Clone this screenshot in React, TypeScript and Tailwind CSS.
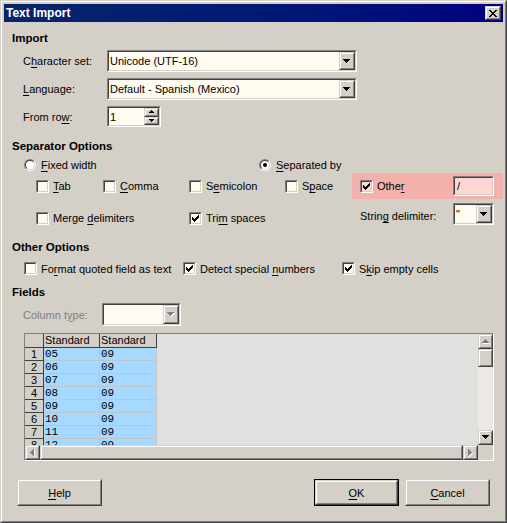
import type { ReactNode } from 'react'

const SUNKEN_OUT = 'border border-t-[#808080] border-l-[#808080] border-r-white border-b-white'
const SUNKEN_IN = 'border border-t-[#404040] border-l-[#404040] border-r-[#d4d0c8] border-b-[#d4d0c8]'
const RAISED_OUT = 'border border-t-[#d4d0c8] border-l-[#d4d0c8] border-r-[#404040] border-b-[#404040]'
const RAISED_IN = 'border border-t-white border-l-white border-r-[#808080] border-b-[#808080]'

const CHECK = ['......#', '.....##', '#...###', '##.###.', '#####..', '.###...', '..#....']
const CLOSE = ['##....##', '.##..##.', '..####..', '...##...', '..####..', '.##..##.', '##....##']

const rows = [
  ['05', '09'],
  ['06', '09'],
  ['07', '09'],
  ['08', '09'],
  ['09', '09'],
  ['10', '09'],
  ['11', '09'],
  ['12', '09'],
]

// "~" marks the accelerator letter, like the original resource strings
function T({ s }: { s: string }) {
  const i = s.indexOf('~')
  if (i < 0) return <>{s}</>
  return (
    <>
      {s.slice(0, i)}
      <span className="underline underline-offset-[2px]">{s[i + 1]}</span>
      {s.slice(i + 2)}
    </>
  )
}

function Bitmap({ map }: { map: string[] }) {
  return (
    <svg width={map[0].length} height={map.length} shapeRendering="crispEdges">
      {map.map((line, y) =>
        line.split('').map((c, x) => (c === '#' ? <rect key={`${x}-${y}`} x={x} y={y} width={1} height={1} fill="#000" /> : null))
      )}
    </svg>
  )
}

function Arrow({ dir, size = 4, disabled = false }: { dir: 'up' | 'down' | 'left' | 'right'; size?: number; disabled?: boolean }) {
  const rects: number[][] = []
  for (let i = 0; i < size; i++) {
    const len = 2 * (size - i) - 1
    if (dir === 'down') rects.push([i, i, len, 1])
    if (dir === 'up') rects.push([i, size - 1 - i, len, 1])
    if (dir === 'right') rects.push([i, i, 1, len])
    if (dir === 'left') rects.push([size - 1 - i, i, 1, len])
  }
  const horiz = dir === 'up' || dir === 'down'
  const w = horiz ? 2 * size - 1 : size
  const h = horiz ? size : 2 * size - 1
  return (
    <svg width={w + 1} height={h + 1} shapeRendering="crispEdges">
      {disabled && rects.map((r, k) => <rect key={`s${k}`} x={r[0] + 1} y={r[1] + 1} width={r[2]} height={r[3]} fill="#fff" />)}
      {rects.map((r, k) => (
        <rect key={k} x={r[0]} y={r[1]} width={r[2]} height={r[3]} fill={disabled ? '#808080' : '#000'} />
      ))}
    </svg>
  )
}

function Sunken({ className = '', inner = '', children }: { className?: string; inner?: string; children?: ReactNode }) {
  return (
    <div className={`${SUNKEN_OUT} ${className}`}>
      <div className={`${SUNKEN_IN} h-full w-full ${inner}`}>{children}</div>
    </div>
  )
}

function Raised({ className = '', children }: { className?: string; children?: ReactNode }) {
  return (
    <div className={`${RAISED_OUT} bg-[#d4d0c8] shrink-0 ${className}`}>
      <div className={`${RAISED_IN} h-full w-full flex items-center justify-center`}>{children}</div>
    </div>
  )
}

function Checkbox({ checked = false, bg = 'bg-[#fffbf0]' }: { checked?: boolean; bg?: string }) {
  return (
    <Sunken className="w-[13px] h-[13px] shrink-0" inner={`${bg} flex items-center justify-center`}>
      {checked && <Bitmap map={CHECK} />}
    </Sunken>
  )
}

function Radio({ checked = false }: { checked?: boolean }) {
  return (
    <div className="w-[12px] h-[12px] shrink-0 rounded-full border border-t-[#808080] border-l-[#808080] border-r-white border-b-white">
      <div className="w-full h-full rounded-full border border-t-[#404040] border-l-[#404040] border-r-[#d4d0c8] border-b-[#d4d0c8] bg-white flex items-center justify-center">
        {checked && <div className="w-[4px] h-[4px] rounded-full bg-black" />}
      </div>
    </div>
  )
}

function Combo({ value, className, disabled = false }: { value: string; className: string; disabled?: boolean }) {
  return (
    <Sunken className={className} inner="flex bg-[#fffbf0]">
      <div className="flex-1 pl-[1px] flex items-center overflow-hidden whitespace-nowrap">{value}</div>
      <Raised className="w-[16px] h-full">
        <Arrow dir="down" disabled={disabled} />
      </Raised>
    </Sunken>
  )
}

function Opt({ w, s, checked = false }: { w: string; s: string; checked?: boolean }) {
  return (
    <div className={`${w} flex items-center`}>
      <Checkbox checked={checked} />
      <span className="ml-[4px] whitespace-nowrap">
        <T s={s} />
      </span>
    </div>
  )
}

function Heading({ children, mt }: { children: ReactNode; mt: string }) {
  return <div className={`${mt} ml-[8px] h-[14px] leading-[14px] font-bold text-[11.5px]`}>{children}</div>
}

export default function App() {
  return (
    <div className="w-[507px] h-[523px] bg-[#d4d0c8] text-black text-[11px] leading-[14px] font-['Liberation_Sans',Arial,sans-serif] border border-t-[#d4d0c8] border-l-[#d4d0c8] border-r-[#404040] border-b-[#404040]">
      <div className="w-full h-full p-[2px] flex flex-col border border-t-white border-l-white border-r-[#808080] border-b-[#808080]">
        {/* title bar */}
        <div className="h-[18px] shrink-0 flex items-center px-[2px] bg-linear-to-r from-[#0a246a] to-[#000080]">
          <span className="text-white font-bold text-[12px]">Text Import</span>
          <Raised className="ml-auto w-[16px] h-[14px]">
            <Bitmap map={CLOSE} />
          </Raised>
        </div>

        <Heading mt="mt-[9px]">Import</Heading>
        <div className="flex h-[22px] mt-[5px] ml-[19px] items-center">
          <div className="w-[84px]">
            <T s="C~haracter set:" />
          </div>
          <Combo className="w-[250px] h-full" value="Unicode (UTF-16)" />
        </div>
        <div className="flex h-[22px] mt-[6px] ml-[19px] items-center">
          <div className="w-[84px]">
            <T s="~Language:" />
          </div>
          <Combo className="w-[250px] h-full" value="Default - Spanish (Mexico)" />
        </div>
        <div className="flex h-[21px] mt-[6px] ml-[19px] items-center">
          <div className="w-[84px]">
            <T s="From ro~w:" />
          </div>
          <Sunken className="w-[54px] h-full" inner="flex bg-[#fffbf0]">
            <div className="flex-1 pl-[1px] flex items-center">1</div>
            <div className="w-[15px] h-full flex flex-col">
              <Raised className="h-1/2">
                <Arrow dir="up" size={3} />
              </Raised>
              <Raised className="h-1/2">
                <Arrow dir="down" size={3} />
              </Raised>
            </div>
          </Sunken>
        </div>

        <Heading mt="mt-[12px]">Separator Options</Heading>
        <div className="flex h-[14px] mt-[5px] ml-[20px] items-center">
          <div className="w-[235px] flex items-center">
            <Radio />
            <span className="ml-[5px]">
              <T s="~Fixed width" />
            </span>
          </div>
          <div className="flex items-center">
            <Radio checked />
            <span className="ml-[5px]">
              <T s="~Separated by" />
            </span>
          </div>
        </div>
        <div className="flex h-[26px] mt-[1px] ml-[32px] items-center">
          <Opt w="w-[67px]" s="~Tab" />
          <Opt w="w-[86px]" s="~Comma" />
          <Opt w="w-[96px]" s="S~emicolon" />
          <Opt w="w-[67px]" s="S~pace" />
          <div className="w-[151px] h-full bg-[#f4b1ab] flex items-center pl-[8px]">
            <Checkbox checked bg="bg-[#ffd8d4]" />
            <span className="ml-[4px]">
              <T s="Othe~r" />
            </span>
            <Sunken className="ml-auto mr-[9px] w-[41px] h-[20px]" inner="bg-[#ffd6d2] pl-[2px] leading-[16px]">
              /
            </Sunken>
          </div>
        </div>
        <div className="flex h-[24px] mt-[4px] ml-[32px] items-start">
          <div className="w-[153px] mt-[8px]">
            <Opt w="w-full" s="Merge ~delimiters" />
          </div>
          <div className="w-[171px] mt-[8px]">
            <Opt w="w-full" s="Tri~m spaces" checked />
          </div>
          <div className="w-[93px] mt-[6px] leading-[14px]">
            <T s="Strin~g delimiter:" />
          </div>
          <Combo className="w-[41px] h-[22px]" value={'"'} />
        </div>

        <Heading mt="mt-[13px]">Other Options</Heading>
        <div className="flex h-[13px] mt-[8px] ml-[20px] items-center">
          <Opt w="w-[159px]" s="Fo~rmat quoted field as text" />
          <Opt w="w-[159px]" s="Detect special ~numbers" checked />
          <Opt w="w-[140px]" s="S~kip empty cells" checked />
        </div>

        <Heading mt="mt-[10px]">Fields</Heading>
        <div className="flex h-[23px] mt-[4px] ml-[19px] items-center">
          <div className="w-[79px] text-[#808080]">
            <T s="Column t~ype:" />
          </div>
          <Combo className="w-[79px] h-full" value="" disabled />
        </div>

        {/* preview grid */}
        <div className="mt-[7px] ml-[20px] w-[470px] h-[128px] shrink-0 flex flex-col border border-t-[#808080] border-l-[#808080] border-r-white border-b-white">
          <div className="flex h-[111px]">
            <div className="w-[453px] h-full bg-[#e0e0de] overflow-hidden">
              <div className="flex h-[14px]">
                <div className="w-[19px] h-full bg-[#d4d0c8] border-r border-b border-[#404040]" />
                <div className="w-[56px] h-full bg-[#d4d0c8] border-r border-b border-[#404040] pl-[1px] leading-[13px]">
                  Standard
                </div>
                <div className="w-[57px] h-full bg-[#d4d0c8] border-r border-b border-[#404040] pl-[1px] leading-[13px]">
                  Standard
                </div>
              </div>
              {rows.map((r, i) => (
                <div key={i} className="flex h-[13px]">
                  <div className="w-[19px] h-full bg-[#d4d0c8] border-r border-b border-[#404040] text-center leading-[13px]">
                    {i + 1}
                  </div>
                  <div className="w-[56px] h-full bg-[#a6d9ff] border-r border-b border-[#c4c4c4] pl-[1px] leading-[12px] font-['Liberation_Mono',monospace]">
                    {r[0]}
                  </div>
                  <div className="w-[57px] h-full bg-[#a6d9ff] border-r border-b border-[#c4c4c4] pl-[1px] leading-[12px] font-['Liberation_Mono',monospace]">
                    {r[1]}
                  </div>
                </div>
              ))}
            </div>
            <div className="w-[15px] h-full flex flex-col bg-[#ebe9e4]">
              <Raised className="h-[15px]">
                <Arrow dir="up" disabled />
              </Raised>
              <Raised className="h-[18px]" />
              <div className="flex-1" />
              <Raised className="h-[15px]">
                <Arrow dir="down" />
              </Raised>
            </div>
          </div>
          <div className="flex h-[15px]">
            <Raised className="w-[15px] h-full">
              <Arrow dir="left" disabled />
            </Raised>
            <Raised className="w-[423px] h-full" />
            <Raised className="w-[15px] h-full">
              <Arrow dir="right" disabled />
            </Raised>
            <div className="w-[15px] h-full bg-[#d4d0c8]" />
          </div>
        </div>

        {/* buttons */}
        <div className="flex h-[27px] mt-[18px] shrink-0">
          <Raised className="ml-[13px] w-[85px] h-full">
            <T s="~Help" />
          </Raised>
          <div className="ml-auto w-[85px] h-full border border-black">
            <Raised className="w-full h-full">
              <T s="~OK" />
            </Raised>
          </div>
          <Raised className="ml-[6px] mr-[13px] w-[85px] h-full">
            <T s="~Cancel" />
          </Raised>
        </div>
      </div>
    </div>
  )
}
